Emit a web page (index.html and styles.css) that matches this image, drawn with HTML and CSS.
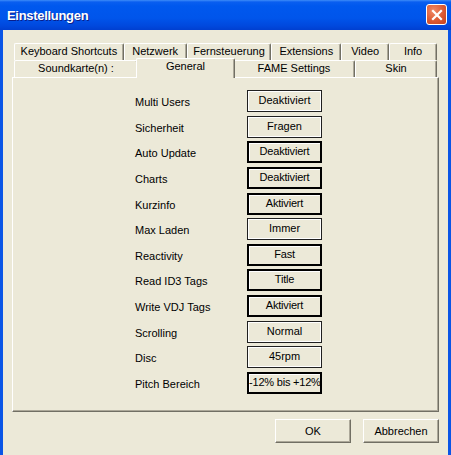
FILE: index.html
```html
<!DOCTYPE html>
<html lang="de">
<head>
  <meta charset="UTF-8">
  <title>Einstellungen</title>
  <link rel="stylesheet" href="styles.css">
</head>
<body>

  <div class="window">
    <!-- Caption bar -->
    <div class="titlebar">
      <span class="caption">Einstellungen</span>
      <div class="close">
        <svg width="12" height="12" viewBox="0 0 12 12">
          <path d="M2 2 L10 10 M10 2 L2 10" stroke="#fff" stroke-width="2.2" stroke-linecap="square"/>
        </svg>
      </div>
    </div>

    <div class="client">
      <!-- Two rows of tabs, the selected row sits on the panel -->
      <div class="tabs">
        <div class="tabrow">
          <div class="tab w-keys">Keyboard Shortcuts</div>
          <div class="tab w-net">Netzwerk</div>
          <div class="tab w-remote">Fernsteuerung</div>
          <div class="tab w-ext">Extensions</div>
          <div class="tab w-video">Video</div>
          <div class="tab w-info">Info</div>
        </div>
        <div class="tabrow">
          <div class="tab w-sound">Soundkarte(n) :</div>
          <div class="tab w-general active">General</div>
          <div class="tab w-fame">FAME Settings</div>
          <div class="tab w-skin">Skin</div>
        </div>
      </div>

      <div class="panel">
        <div class="settings">
          <span class="label">Multi Users</span><div class="value">Deaktiviert</div>
          <span class="label">Sicherheit</span><div class="value">Fragen</div>
          <span class="label">Auto Update</span><div class="value bold">Deaktiviert</div>
          <span class="label">Charts</span><div class="value bold">Deaktiviert</div>
          <span class="label">Kurzinfo</span><div class="value bold">Aktiviert</div>
          <span class="label">Max Laden</span><div class="value">Immer</div>
          <span class="label">Reactivity</span><div class="value bold">Fast</div>
          <span class="label">Read ID3 Tags</span><div class="value bold">Title</div>
          <span class="label">Write VDJ Tags</span><div class="value bold">Aktiviert</div>
          <span class="label">Scrolling</span><div class="value">Normal</div>
          <span class="label">Disc</span><div class="value">45rpm</div>
          <span class="label">Pitch Bereich</span><div class="value bold">-12% bis +12%</div>
        </div>
      </div>

      <div class="actions">
        <button class="btn">OK</button>
        <button class="btn">Abbrechen</button>
      </div>
    </div>
  </div>

</body>
</html>
```

FILE: styles.css
```css
body {
  margin: 0;
  font-family: 'Liberation Sans', Arial, sans-serif;
  font-size: 11px;
  color: #000;
}

.window {
  width: 451px;
  height: 455px;
  display: flex;
  flex-direction: column;
  overflow: hidden;
}

/* caption */
.titlebar {
  height: 30px;
  flex: none;
  display: flex;
  align-items: center;
  justify-content: space-between;
  padding: 0 4px 0 7px;
  box-sizing: border-box;
  background: linear-gradient(#3d8cf8 0, #0a5ef0 2px, #0058ee 6px, #0055eb 18px, #0048dd 26px, #003fd0 30px);
}

.caption {
  color: #fff;
  font-weight: bold;
  font-size: 13px;
  text-shadow: 1px 1px 0 #0a1e8a;
  letter-spacing: -0.3px;
}

.close {
  width: 19px;
  height: 19px;
  margin-top: -1px;
  border: 1px solid #fff;
  border-radius: 3px;
  display: flex;
  align-items: center;
  justify-content: center;
  background: radial-gradient(circle at 35% 30%, #f08a68, #dc5a33 55%, #c4411c);
}

.client {
  flex: 1;
  background: #ece9d8;
  border-left: 3px solid #0a55e6;
  border-right: 3px solid #0a55e6;
  padding: 13px 9px 0 9px;
  display: flex;
  flex-direction: column;
}

/* tab strip */
.tabs {
  padding: 0 2px;
}

.tabrow {
  display: flex;
  height: 17px;
}

.tab {
  box-sizing: border-box;
  height: 17px;
  border-top: 1px solid #fff;
  border-left: 1px solid #fff;
  border-right: 1px solid #716f64;
  box-shadow: inset -1px 0 0 #aca899;
  border-radius: 2px 2px 0 0;
  text-align: center;
  line-height: 15px;
  white-space: nowrap;
}

.tab.active {
  position: relative;
  z-index: 1;
  height: 20px;
  margin: -2px -2px -1px;
  padding-bottom: 3px;
  background: #ece9d8;
  line-height: 15px;
}

.w-keys { width: 110px; }
.w-net { width: 63px; }
.w-remote { width: 85px; }
.w-ext { width: 70px; }
.w-video { width: 48px; }
.w-info { width: 48px; }
.w-sound { width: 124px; }
.w-general { width: 99px; }
.w-fame { width: 122px; }
.w-skin { width: 82px; }

/* page of the selected tab */
.panel {
  height: 335px;
  box-sizing: border-box;
  border-top: 1px solid #fff;
  border-left: 1px solid #fff;
  border-right: 1px solid #716f64;
  border-bottom: 1px solid #716f64;
  box-shadow: inset -1px -1px 0 #aca899;
  padding: 12px 0 0 122px;
}

.settings {
  display: grid;
  grid-template-columns: 112px 75px;
  grid-auto-rows: 22px;
  row-gap: 3.65px;
  align-items: center;
}

.label {
  padding-top: 2px;
}

.value {
  box-sizing: border-box;
  height: 22px;
  border: 1px solid #202020;
  box-shadow: inset 1px 1px 0 #fff, inset -1px -1px 0 #fff;
  text-align: center;
  line-height: 19px;
  white-space: nowrap;
  overflow: hidden;
}

.value.bold {
  border: 2px solid #000;
  box-shadow: inset 1px 1px 0 #fff;
  line-height: 17px;
  letter-spacing: -0.2px;
}

/* dialog buttons */
.actions {
  display: flex;
  justify-content: flex-end;
  gap: 12px;
  padding: 7px 0 0 0;
}

.btn {
  width: 76px;
  height: 24px;
  font: inherit;
  color: #000;
  background: #ece9d8;
  border: 1px solid;
  border-color: #fff #716f64 #716f64 #fff;
  box-shadow: inset -1px -1px 0 #aca899;
  padding: 0;
}
```
